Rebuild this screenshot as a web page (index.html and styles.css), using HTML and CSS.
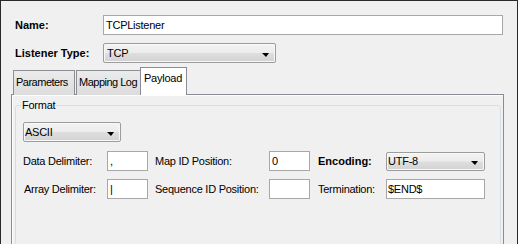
FILE: index.html
```html
<!DOCTYPE html>
<html>
<head>
<meta charset="utf-8">
<link rel="stylesheet" href="styles.css">
</head>
<body>
<div class="frame">
  <div class="row row-name">
    <span class="lbl bold">Name:</span>
    <div class="field name-field">TCPListener</div>
  </div>
  <div class="row row-type">
    <span class="lbl bold">Listener Type:</span>
    <div class="combo type-combo"><span class="combo-text">TCP</span><span class="arrow"></span></div>
  </div>
  <div class="tabs">
    <div class="tab tab-params">Parameters</div>
    <div class="tab tab-log">Mapping Log</div>
    <div class="tab tab-payload active">Payload</div>
  </div>
  <div class="panel">
    <fieldset class="group">
      <legend class="group-title">Format</legend>
      <div class="combo ascii-combo"><span class="combo-text">ASCII</span><span class="arrow"></span></div>
      <div class="form-grid">
        <span class="glbl">Data Delimiter:</span>
        <div class="field small">,</div>
        <span class="glbl">Map ID Position:</span>
        <div class="field small">0</div>
        <span class="glbl bold">Encoding:</span>
        <div class="combo enc-combo"><span class="combo-text">UTF-8</span><span class="arrow"></span></div>

        <span class="glbl shift">Array Delimiter:</span>
        <div class="field small">|</div>
        <span class="glbl">Sequence ID Position:</span>
        <div class="field small"></div>
        <span class="glbl">Termination:</span>
        <div class="field wide">$END$</div>
      </div>
    </fieldset>
  </div>
</div>
</body>
</html>
```

FILE: styles.css
```css
html, body {
  margin: 0;
  padding: 0;
  background: #f0f0f0;
}
body {
  width: 518px;
  height: 244px;
  overflow: hidden;
  font-family: "Liberation Sans", Arial, sans-serif;
  font-size: 11px;
  letter-spacing: -0.25px;
  color: #000;
}
.frame {
  box-sizing: border-box;
  width: 518px;
  height: 244px;
  border-top: 1px solid #2a2a2a;
  border-left: 1px solid #2a2a2a;
  border-right: 1px solid #2a2a2a;
  padding-top: 14px;
  overflow: hidden;
}
.bold { font-weight: bold; letter-spacing: 0; }
.row {
  display: flex;
  align-items: center;
  height: 20px;
  padding-left: 14px;
}
.row-type { margin-top: 8px; }
.lbl {
  width: 88px;
  flex: none;
}
.field {
  box-sizing: border-box;
  height: 20px;
  background: #fff;
  border: 1px solid #a8a8a8;
  padding-left: 2px;
  line-height: 18px;
  white-space: nowrap;
}
.name-field { width: 400px; }
.combo {
  box-sizing: border-box;
  height: 20px;
  display: flex;
  align-items: center;
  border: 1px solid #9c9c9c;
  box-shadow: inset 0 0 0 1px #f8f8f8;
  background: linear-gradient(#f3f3f3 0%, #ececec 48%, #dedede 52%, #d2d2d2 100%);
  padding-left: 2px;
  padding-right: 6px;
  border-radius: 2px;
}
.combo-text { flex: 1; }
.arrow {
  width: 0;
  height: 0;
  border-top: 4px solid #000;
  border-left: 4px solid transparent;
  border-right: 3px solid transparent;
  margin-top: 3px;
}
.type-combo { width: 173px; padding-left: 3px; }
.tabs {
  display: flex;
  align-items: flex-end;
  height: 27px;
  margin-top: 5px;
  padding-left: 12px;
  position: relative;
  z-index: 1;
  margin-bottom: -1px;
}
.tab {
  box-sizing: border-box;
  height: 25px;
  border: 1px solid #8c8e94;
  border-bottom: none;
  background: linear-gradient(#ebebeb, #dcdcdc);
  padding: 5px 0 0 2px;
  white-space: nowrap;
  overflow: hidden;
  letter-spacing: -0.5px;
}
.tab-params { width: 62px; }
.tab-log { width: 65px; margin-left: 1px; }
.tab-payload {
  width: 47px;
  margin-left: -1px;
}
.tab.active {
  height: 28px;
  background: #fff;
  padding-top: 4px;
  padding-left: 3px;
  border-color: #898c95;
  letter-spacing: -0.25px;
}
.panel {
  box-sizing: border-box;
  width: 493px;
  height: 160px;
  margin-left: 10px;
  border: 1px solid #898c95;
  box-shadow: inset 1px 1px 0 #fdfdfd;
  padding: 4px 2px 0 3px;
}
.group {
  margin: 0;
  padding: 0 0 0 7px;
  border: 1px solid #d5dfe5;
  border-radius: 3px;
  height: 150px;
  box-sizing: border-box;
  min-width: 0;
}
.group-title {
  padding: 0 1px;
  margin-left: -2px;
  line-height: 13px;
}
.ascii-combo {
  width: 98px;
  margin-top: 10px;
  padding-left: 1px;
}
.form-grid {
  display: grid;
  grid-template-columns: 84px 48px 114px 49px 68px 99px;
  grid-auto-rows: 20px;
  row-gap: 8px;
  margin-top: 9px;
  align-items: center;
}
.glbl { white-space: nowrap; }
.glbl.shift { padding-left: 1px; }
.field.small { width: 41px; }
.field.wide { width: 99px; padding-left: 1px; }
.enc-combo { width: 99px; height: 19px; padding-left: 1px; }
```
